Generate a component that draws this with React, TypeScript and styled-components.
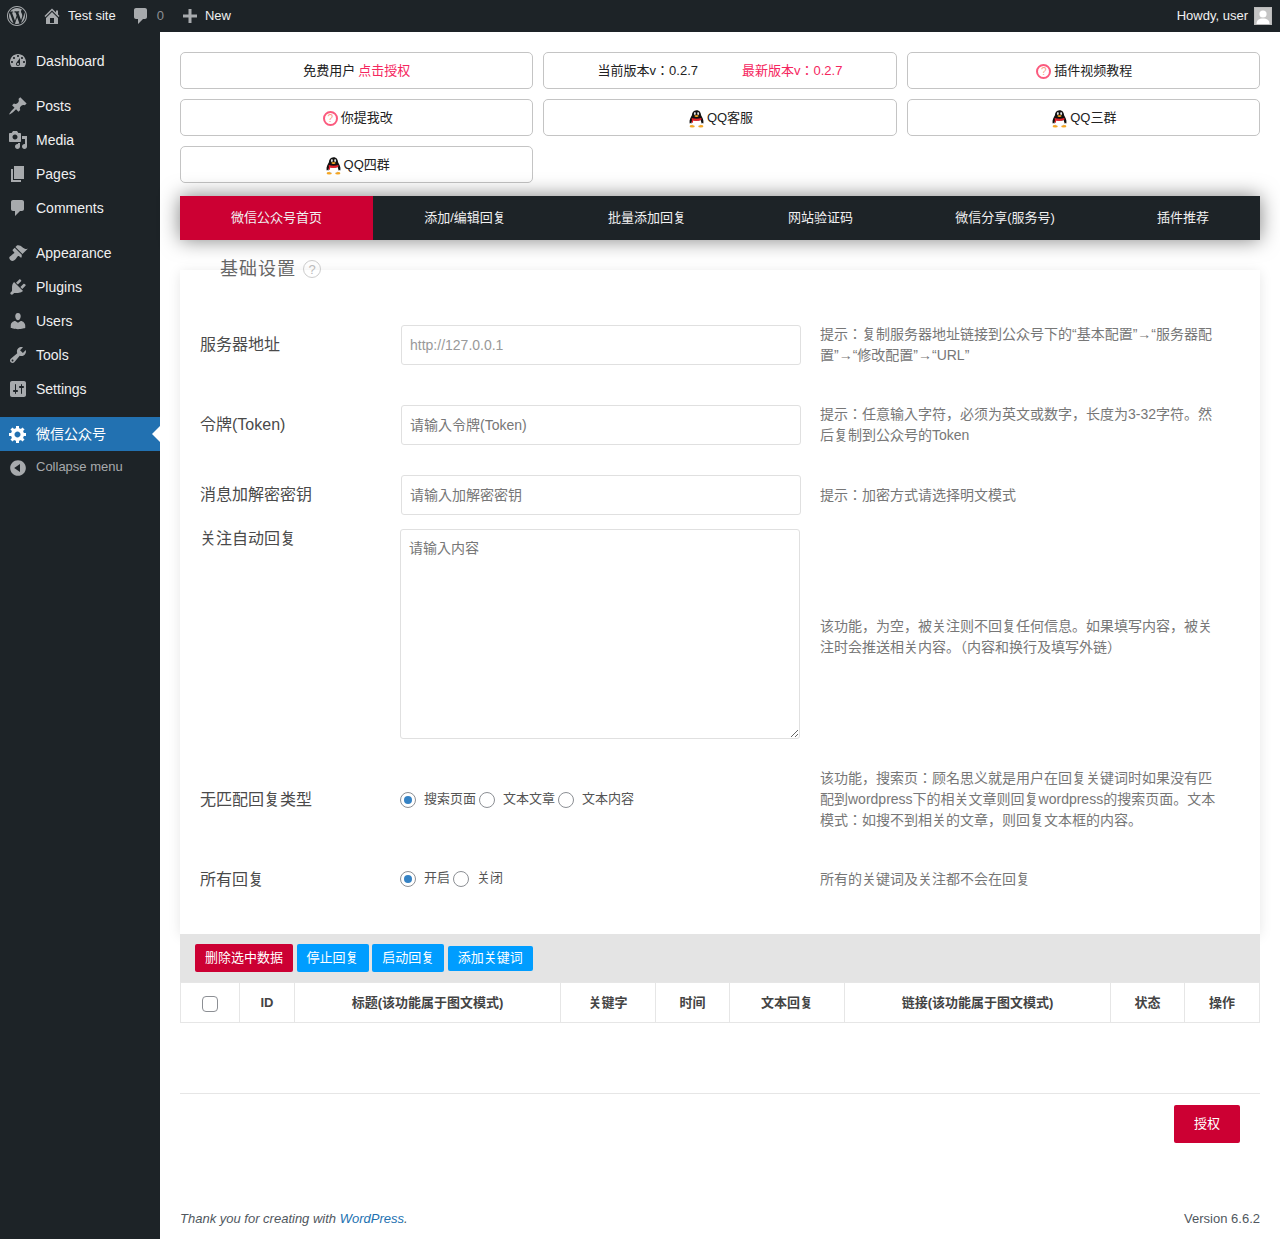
import React from 'react';
import styled, { createGlobalStyle } from 'styled-components';

const FONT = '"Liberation Sans", "Noto Sans CJK JP", sans-serif';

const GlobalStyle = createGlobalStyle`
  html, body { margin: 0; padding: 0; background: #fff; }
  body { font-family: ${FONT}; font-size: 13px; line-height: 1.15; color: #3c434a; }
  * { box-sizing: border-box; }
`;

const ICONS: Record<string, string> = {
  wp: 'M20 10c0-5.52-4.48-10-10-10S0 4.48 0 10s4.48 10 10 10 10-4.48 10-10zM10 1.01c4.97 0 8.99 4.02 8.99 8.99s-4.02 8.99-8.99 8.99S1.01 14.97 1.01 10 5.03 1.01 10 1.01zM8.01 14.82L4.96 6.61c.49-.03 1.05-.08 1.05-.08.43-.05.38-1.01-.06-.99 0 0-1.29.1-2.13.1-.15 0-.33 0-.52-.01 1.44-2.17 3.9-3.6 6.7-3.6 2.09 0 3.99.79 5.41 2.09-.6-.08-1.45.35-1.45 1.42 0 .66.38 1.22.79 1.88.31.54.5 1.22.5 2.21 0 1.34-1.27 4.48-1.27 4.48l-2.71-7.5c.48-.03.75-.16.75-.16.43-.05.38-1.1-.05-1.08 0 0-1.3.11-2.14.11-.78 0-2.11-.11-2.11-.11-.43-.02-.48 1.06-.05 1.08l.84.08 1.12 3.04zm6.02 2.15L16.64 10s.67-1.69.39-3.81c.63 1.14.94 2.42.94 3.81 0 2.96-1.56 5.58-3.94 7.01zM2.68 6.77L6.5 17.25c-2.67-1.3-4.47-4.08-4.47-7.25 0-1.16.2-2.23.65-3.23zm7.45 4.53l2.29 6.25c-.76.27-1.57.42-2.42.42-.72 0-1.41-.11-2.06-.3z',
  home: 'M16 8.5l1.53 1.53-1.06 1.06L10 4.62l-6.47 6.47-1.06-1.06L10 2.5l4 4v-2h2v4zm-6-2.46l6 5.99V18H4v-5.97zM12 17v-5H8v5h4z',
  plus: 'M17 8.5v3h-5.5V17h-3v-5.5H3v-3h5.5V3h3v5.5H17z',
  dashboard: 'M3.76 16h12.48c1.1-1.37 1.76-3.11 1.76-5 0-4.42-3.58-8-8-8s-8 3.58-8 8c0 1.89.66 3.63 1.76 5zM10 4c.55 0 1 .45 1 1s-.45 1-1 1-1-.45-1-1 .45-1 1-1zM6 6c.55 0 1 .45 1 1s-.45 1-1 1-1-.45-1-1 .45-1 1-1zm8 0c.55 0 1 .45 1 1s-.45 1-1 1-1-.45-1-1 .45-1 1-1zm-5.37 5.55L12 7v6c0 1.1-.9 2-2 2s-2-.9-2-2c0-.57.24-1.08.63-1.45zM4 10c.55 0 1 .45 1 1s-.45 1-1 1-1-.45-1-1 .45-1 1-1zm12 0c.55 0 1 .45 1 1s-.45 1-1 1-1-.45-1-1 .45-1 1-1zm-5 3c0-.55-.45-1-1-1s-1 .45-1 1 .45 1 1 1 1-.45 1-1z',
  post: 'M10.44 3.02l1.82-1.82 6.36 6.35-1.83 1.82c-1.05-.68-2.48-.57-3.41.36l-.75.75c-.92.93-1.04 2.35-.35 3.41l-1.83 1.82-2.41-2.41-2.8 2.79c-.42.42-3.38 2.71-3.8 2.29s1.86-3.39 2.28-3.81l2.79-2.79L4.1 9.36l1.83-1.82c1.05.69 2.48.57 3.4-.36l.75-.75c.93-.92 1.05-2.35.36-3.41z',
  media: 'M13 11V4c0-.55-.45-1-1-1h-1.67L9 1H5L3.67 3H2c-.55 0-1 .45-1 1v7c0 .55.45 1 1 1h10c.55 0 1-.45 1-1zM7 4.5c1.38 0 2.5 1.12 2.5 2.5S8.38 9.5 7 9.5 4.5 8.38 4.5 7 5.62 4.5 7 4.5zM14 6h5v10.5c0 1.38-1.12 2.5-2.5 2.5S14 17.88 14 16.5s1.12-2.5 2.5-2.5c.17 0 .34.02.5.05V9h-3V6zm-4 8.05V13h2v3.5c0 1.38-1.12 2.5-2.5 2.5S7 17.88 7 16.5 8.12 14 9.5 14c.17 0 .34.02.5.05z',
  page: 'M6 15V2h10v13H6zm-1 1h8v2H3V5h2v11z',
  comment: 'M5 2h9c1.1 0 2 .9 2 2v7c0 1.1-.9 2-2 2h-2l-5 5v-5H5c-1.1 0-2-.9-2-2V4c0-1.1.9-2 2-2z',
  appearance: 'M14.48 11.06L7.41 3.99l1.5-1.5c.5-.56 2.3-.47 3.51.32 1.21.8 1.43 1.28 2.91 2.1 1.18.64 2.45 1.26 4.45.85zm-.71.71L6.7 4.7 4.93 6.47c-.39.39-.39 1.02 0 1.41l1.06 1.06c.39.39.39 1.03 0 1.42-.6.6-1.43 1.11-2.21 1.69-.35.26-.7.53-1.01.84C1.43 13.23.4 14.98 2.3 16.88c1.89 1.9 3.65.86 4.97-.45.31-.31.58-.66.84-1.01.58-.78 1.09-1.61 1.69-2.21.39-.39 1.02-.39 1.41 0l1.06 1.06c.39.39 1.02.39 1.41 0z',
  plugin: 'M13.11 4.36L9.87 7.6 8 5.73l3.24-3.24c.35-.34 1.05-.2 1.56.32.52.51.66 1.21.31 1.55zm-8 1.77l.91-1.12 9.01 9.01-1.19.84c-.71.71-2.63 1.16-3.82 1.16H6.14L4.9 17.26c-.59.59-1.54.59-2.12 0-.59-.58-.59-1.53 0-2.12l1.24-1.24v-3.88c0-1.13.4-3.19 1.09-3.89zm7.26 3.97l3.24-3.24c.34-.35 1.04-.21 1.55.31.52.51.66 1.21.31 1.55l-3.24 3.25z',
  users: 'M10 9.25c-2.27 0-2.73-3.44-2.73-3.44C7 4.02 7.82 2 9.97 2c2.16 0 2.98 2.02 2.71 3.81 0 0-.41 3.44-2.68 3.44zm0 2.57L12.72 10c2.39 0 4.52 2.33 4.52 4.53v2.49s-3.65 1.13-7.24 1.13c-3.65 0-7.24-1.13-7.24-1.13v-2.49c0-2.25 1.94-4.48 4.47-4.48z',
  tools: 'M16.68 9.77c-1.34 1.34-3.3 1.67-4.95.99l-5.41 6.52c-.99.99-2.59.99-3.58 0s-.99-2.59 0-3.57l6.52-5.42c-.68-1.65-.35-3.61.99-4.95 1.28-1.28 3.12-1.62 4.72-1.06l-2.89 2.89 2.82 2.82 2.86-2.87c.53 1.58.18 3.39-1.08 4.65zM3.81 16.21c.4.39 1.04.39 1.43 0 .4-.4.4-1.04 0-1.43-.39-.4-1.03-.4-1.43 0-.39.39-.39 1.03 0 1.43z',
  settings: 'M18 16V4c0-1.1-.9-2-2-2H4c-1.1 0-2 .9-2 2v12c0 1.1.9 2 2 2h12c1.1 0 2-.9 2-2zM8 11h1c.55 0 1 .45 1 1s-.45 1-1 1H8v1.5c0 .28-.22.5-.5.5s-.5-.22-.5-.5V13H6c-.55 0-1-.45-1-1s.45-1 1-1h1V5.5c0-.28.22-.5.5-.5s.5.22.5.5V11zm5-2h-1c-.55 0-1-.45-1-1s.45-1 1-1h1V5.5c0-.28.22-.5.5-.5s.5.22.5.5V7h1c.55 0 1 .45 1 1s-.45 1-1 1h-1v5.5c0 .28-.22.5-.5.5s-.5-.22-.5-.5V9z',
  gear: 'M18 12h-2.18c-.17.7-.44 1.35-.81 1.93l1.54 1.54-2.1 2.1-1.54-1.54c-.58.36-1.23.63-1.91.79V19H8v-2.18c-.68-.16-1.33-.43-1.91-.79l-1.54 1.54-2.12-2.12 1.54-1.54c-.36-.58-.63-1.23-.79-1.91H1V9.03h2.17c.16-.7.44-1.35.8-1.94L2.43 5.55l2.1-2.1 1.54 1.54c.58-.37 1.24-.64 1.93-.81V2h3v2.18c.68.16 1.33.43 1.91.79l1.54-1.54 2.12 2.12-1.54 1.54c.36.59.64 1.24.8 1.94H18V12zm-8.5 1.5c1.66 0 3-1.34 3-3s-1.34-3-3-3-3 1.34-3 3 1.34 3 3 3z',
  collapse: 'M10 2.16c4.33 0 7.84 3.51 7.84 7.84s-3.51 7.84-7.84 7.84S2.16 14.33 2.16 10 5.71 2.16 10 2.16zm2 11.72V6.12L6.18 9.97z',
};

const Dash = ({ name, size = 20, color = '#a7aaad' }: { name: string; size?: number; color?: string }) => (
  <svg width={size} height={size} viewBox="0 0 20 20" fill={color} fillRule="evenodd">
    <path d={ICONS[name]} />
  </svg>
);

const QQ = () => (
  <svg width="17" height="18" viewBox="0 0 17 18">
    <ellipse cx="4.2" cy="16.3" rx="2.6" ry="1.3" fill="#f5a623" />
    <ellipse cx="12.8" cy="16.3" rx="2.6" ry="1.3" fill="#f5a623" />
    <path d="M8.5 0.3c3 0 4.4 2.2 4.6 5 1.2 2 2.8 5 2.3 7.6-.2.9-1 .6-1.7-.3-.4 2.4-2.3 3.4-5.2 3.4s-4.8-1-5.2-3.4c-.7.9-1.5 1.2-1.7.3-.5-2.6 1.1-5.6 2.3-7.6.2-2.8 1.6-5 4.6-5z" fill="#111" />
    <path d="M4.4 10c1.6.8 6.6.8 8.2 0 .7 1.8.9 3.2.6 4.1-.5 1.5-2.2 2.1-4.7 2.1s-4.2-.6-4.7-2.1c-.3-.9-.1-2.3.6-4.1z" fill="#fff" />
    <path d="M3.8 7.9c2.6 1.1 6.8 1.1 9.4 0 .4.4.4 1.5 0 1.9-.6.5-1.6.8-2.8 1-1.9.2-3.9.1-5.3-.3l-.1 2.4c-.7-.2-1.2-.6-1.4-1.2l.4-2c-.4-.4-.4-1.4-.2-1.8z" fill="#e8202a" />
    <ellipse cx="6.9" cy="3.7" rx="1" ry="1.4" fill="#fff" />
    <ellipse cx="10.1" cy="3.7" rx="1" ry="1.4" fill="#fff" />
    <circle cx="7.1" cy="4" r=".5" fill="#111" />
    <circle cx="9.9" cy="4" r=".5" fill="#111" />
    <path d="M6.3 5.7c1-.6 3.4-.6 4.4 0-.6 1-1.4 1.3-2.2 1.3s-1.6-.3-2.2-1.3z" fill="#f5a623" />
  </svg>
);

const Help = styled.span<{ $size: number; $ring: number; $color: string; $mark: string }>`
  display: inline-flex;
  align-items: center;
  justify-content: center;
  flex: none;
  width: ${(p) => p.$size}px;
  height: ${(p) => p.$size}px;
  border: ${(p) => p.$ring}px solid ${(p) => p.$color};
  border-radius: 50%;
  color: ${(p) => p.$mark};
  font-size: ${(p) => p.$size - 5}px;
  letter-spacing: 0;
  line-height: 1;
`;

const Page = styled.div`
  display: grid;
  grid-template-columns: 160px 1fr;
  grid-template-rows: 32px 1fr;
  min-height: 1239px;
`;

const AdminBar = styled.header`
  grid-column: 1 / 3;
  display: flex;
  align-items: center;
  height: 32px;
  padding: 0 8px 0 7px;
  background: #1d2327;
  color: #f0f0f1;
  font-size: 13px;
`;

const BarItem = styled.span<{ $gap?: number; $left?: number; $muted?: boolean }>`
  display: flex;
  align-items: center;
  gap: ${(p) => p.$gap ?? 6}px;
  margin-left: ${(p) => p.$left ?? 0}px;
  color: ${(p) => (p.$muted ? '#a7aaad' : '#f0f0f1')};
`;

const Count = styled.span`
  color: #8c8f94;
`;

const Howdy = styled.span`
  display: flex;
  align-items: center;
  gap: 6px;
  margin-left: auto;
`;

const Avatar = styled.span`
  display: block;
  width: 18px;
  height: 18px;
  background: #c4c4c4;
  border: 1px solid #bbb;
  overflow: hidden;
  svg { display: block; }
`;

const Sidebar = styled.nav`
  background: #1d2327;
  padding-top: 12px;
`;

const MenuItem = styled.div<{ $active?: boolean }>`
  position: relative;
  display: flex;
  align-items: center;
  height: 34px;
  padding-left: 8px;
  gap: 8px;
  font-size: 14px;
  color: ${(p) => (p.$active ? '#fff' : '#f0f0f1')};
  background: ${(p) => (p.$active ? '#2271b1' : 'transparent')};
`;

const ActiveArrow = styled.span`
  position: absolute;
  right: 0;
  top: 50%;
  margin-top: -8px;
  border: 8px solid transparent;
  border-right-color: #fff;
  border-left-width: 0;
`;

const MenuSep = styled.div`
  height: 11px;
`;

const CollapseRow = styled.div`
  display: flex;
  align-items: center;
  gap: 8px;
  height: 33px;
  padding-left: 8px;
  font-size: 13px;
  color: #a7aaad;
`;

const Content = styled.main`
  display: flex;
  flex-direction: column;
  padding: 20px 20px 0;
  min-width: 0;
`;

const LinkGrid = styled.div`
  display: grid;
  grid-template-columns: repeat(3, 1fr);
  gap: 10px;
`;

const LinkBox = styled.div<{ $gap?: number; $pad?: number }>`
  display: flex;
  align-items: center;
  justify-content: center;
  gap: ${(p) => p.$gap ?? 2}px;
  height: 37px;
  padding-top: 2px;
  padding-left: ${(p) => p.$pad ?? 1}px;
  border: 1px solid #c4c4c4;
  border-radius: 5px;
  color: #222;
  font-size: 13px;
`;

const Pink = styled.span`
  color: #f5265e;
`;

const Tabs = styled.div`
  display: flex;
  height: 44px;
  margin-top: 13px;
  background: #1d2327;
  box-shadow: 0 0 20px rgba(0, 0, 0, 0.5);
`;

const Tab = styled.div<{ $active?: boolean }>`
  flex: 1 1 auto;
  display: flex;
  align-items: center;
  justify-content: center;
  padding: 0 30px;
  font-size: 13px;
  color: #f0f0f1;
  background: ${(p) => (p.$active ? '#cc0033' : 'transparent')};
`;

const Panel = styled.section`
  height: 664px;
  margin-top: 30px;
  padding: 0 20px;
  background: #fff;
  box-shadow: 0 2px 12px rgba(0, 0, 0, 0.1);
`;

const Legend = styled.div`
  display: flex;
  align-items: center;
  gap: 7px;
  height: 24px;
  margin: -13px 0 0 20px;
  font-size: 18px;
  letter-spacing: 1px;
  color: #666;
`;

const FormRow = styled.div<{ $top: number; $height: number }>`
  display: grid;
  grid-template-columns: 200px 420px 400px;
  grid-template-rows: 100%;
  align-items: center;
  height: ${(p) => p.$height}px;
  margin-top: ${(p) => p.$top}px;
`;

const FieldLabel = styled.label<{ $atTop?: boolean; $shift?: number }>`
  align-self: ${(p) => (p.$atTop ? 'start' : 'center')};
  margin-top: ${(p) => p.$shift ?? 0}px;
  font-size: 16px;
  color: #4a4a4a;
`;

const Hint = styled.div<{ $shift?: number }>`
  margin-top: ${(p) => p.$shift ?? 0}px;
  font-size: 14px;
  line-height: 21px;
  color: #777;
`;

const TextInput = styled.input<{ $light?: boolean }>`
  display: block;
  width: 400px;
  height: 40px;
  margin-left: 1px;
  padding: 0 8px;
  border: 1px solid #e0e0e0;
  border-radius: 3px;
  font: 14px ${FONT};
  color: #333;
  outline: none;
  &::placeholder { color: ${(p) => (p.$light ? '#999' : '#777')}; }
`;

const TextArea = styled.textarea`
  display: block;
  width: 400px;
  height: 210px;
  padding: 8px;
  border: 1px solid #e0e0e0;
  border-radius: 3px;
  font: 14px/20px ${FONT};
  &::placeholder { color: #777; }
`;

const RadioGroup = styled.div`
  display: flex;
  align-items: center;
  font-size: 13px;
  color: #555;
`;

const Radio = styled.input.attrs({ type: 'radio' })`
  appearance: none;
  position: relative;
  flex: none;
  width: 16px;
  height: 16px;
  margin: 0 8px 0 3px;
  border: 1px solid #8c8f94;
  border-radius: 50%;
  background: #fff;
  &:first-child { margin-left: 0; }
  &:checked::before {
    content: '';
    position: absolute;
    left: 3px;
    top: 3px;
    width: 8px;
    height: 8px;
    border-radius: 50%;
    background: #3582c4;
  }
`;

const Toolbar = styled.div`
  display: flex;
  align-items: center;
  gap: 3.6px;
  height: 48px;
  padding-left: 15px;
  background: #e4e4e4;
`;

const ActionButton = styled.span<{ $red?: boolean; $short?: boolean }>`
  display: flex;
  align-items: center;
  height: ${(p) => (p.$short ? 25 : 28)}px;
  padding: 0 10px;
  border-radius: 2px;
  font-size: 13px;
  color: #fff;
  background: ${(p) => (p.$red ? '#cc0033' : '#009dff')};
`;

const DataTable = styled.table`
  width: 1079px;
  table-layout: fixed;
  border-collapse: collapse;
`;

const Th = styled.th<{ $w: number }>`
  width: ${(p) => p.$w}px;
  height: 40px;
  padding: 2px 0 0;
  border: 1px solid #e6e6e6;
  font-size: 13px;
  font-weight: 700;
  color: #444;
  text-align: center;
`;

const Check = styled.input.attrs({ type: 'checkbox' })`
  appearance: none;
  display: block;
  width: 16px;
  height: 16px;
  margin: 0 auto;
  border: 1px solid #8c8f94;
  border-radius: 4px;
  background: #fff;
`;

const Rule = styled.div`
  margin-top: 70px;
  border-top: 1px solid #e6e6e6;
`;

const SubmitRow = styled.div`
  display: flex;
  justify-content: flex-end;
  padding: 11px 20px 0 0;
`;

const Submit = styled.span`
  display: flex;
  align-items: center;
  justify-content: center;
  width: 66px;
  height: 38px;
  border-radius: 2px;
  background: #cc0033;
  color: #fff;
  font-size: 13px;
`;

const Footer = styled.footer`
  display: flex;
  justify-content: space-between;
  margin-top: auto;
  padding-bottom: 12px;
  font-size: 13px;
  line-height: 16px;
  color: #50575e;
`;

const Thanks = styled.em`
  a { color: #2271b1; text-decoration: none; }
`;

const MENU: (string | [string, string])[] = [
  ['dashboard', 'Dashboard'],
  'sep',
  ['post', 'Posts'],
  ['media', 'Media'],
  ['page', 'Pages'],
  ['comment', 'Comments'],
  'sep',
  ['appearance', 'Appearance'],
  ['plugin', 'Plugins'],
  ['users', 'Users'],
  ['tools', 'Tools'],
  ['settings', 'Settings'],
  'sep',
];

const TABS = ['微信公众号首页', '添加/编辑回复', '批量添加回复', '网站验证码', '微信分享(服务号)', '插件推荐'];

const COLUMNS: [string, number][] = [
  ['ID', 55],
  ['标题(该功能属于图文模式)', 266],
  ['关键字', 95],
  ['时间', 74],
  ['文本回复', 115],
  ['链接(该功能属于图文模式)', 266],
  ['状态', 74],
  ['操作', 75],
];

const PinkHelp = () => <Help $size={15} $ring={2} $color="#fb5a7e" $mark="#f79a86">?</Help>;

export default function App() {
  return (
    <Page>
      <GlobalStyle />
      <AdminBar>
        <Dash name="wp" />
        <BarItem $left={15} $gap={6}><Dash name="home" />Test site</BarItem>
        <BarItem $left={15} $gap={6} $muted><Dash name="comment" /><Count>0</Count></BarItem>
        <BarItem $left={16} $gap={5}><Dash name="plus" />New</BarItem>
        <Howdy>
          Howdy, user
          <Avatar>
            <svg width="16" height="16" viewBox="0 0 16 16" fill="#fff">
              <circle cx="8" cy="6" r="3.6" />
              <path d="M1.5 16c0-4 2.6-5.6 6.5-5.6s6.5 1.6 6.5 5.6z" />
            </svg>
          </Avatar>
        </Howdy>
      </AdminBar>

      <Sidebar>
        {MENU.map((m, i) =>
          m === 'sep' ? (
            <MenuSep key={i} />
          ) : (
            <MenuItem key={i}>
              <Dash name={m[0]} />
              {m[1]}
            </MenuItem>
          ),
        )}
        <MenuItem $active>
          <Dash name="gear" color="#fff" />
          微信公众号
          <ActiveArrow />
        </MenuItem>
        <CollapseRow>
          <Dash name="collapse" />
          Collapse menu
        </CollapseRow>
      </Sidebar>

      <Content>
        <LinkGrid>
          <LinkBox $gap={3} $pad={0}>免费用户<Pink>点击授权</Pink></LinkBox>
          <LinkBox $gap={44} $pad={0}>
            <span>当前版本v：0.2.7</span>
            <Pink>最新版本v：0.2.7</Pink>
          </LinkBox>
          <LinkBox $gap={3} $pad={2}><PinkHelp />插件视频教程</LinkBox>
          <LinkBox $gap={3} $pad={2}><PinkHelp />你提我改</LinkBox>
          <LinkBox><QQ />QQ客服</LinkBox>
          <LinkBox><QQ />QQ三群</LinkBox>
          <LinkBox><QQ />QQ四群</LinkBox>
        </LinkGrid>

        <Tabs>
          {TABS.map((t, i) => (
            <Tab key={t} $active={i === 0}>{t}</Tab>
          ))}
        </Tabs>

        <Panel>
          <Legend>
            基础设置
            <Help $size={18} $ring={1.5} $color="#ccc" $mark="#bbb">?</Help>
          </Legend>

          <FormRow $top={44} $height={40}>
            <FieldLabel>服务器地址</FieldLabel>
            <TextInput $light placeholder="http://127.0.0.1" />
            <Hint>提示：复制服务器地址链接到公众号下的“基本配置”→“服务器配置”→“修改配置”→“URL”</Hint>
          </FormRow>
          <FormRow $top={40} $height={40}>
            <FieldLabel>令牌(Token)</FieldLabel>
            <TextInput placeholder="请输入令牌(Token)" />
            <Hint>提示：任意输入字符，必须为英文或数字，长度为3-32字符。然后复制到公众号的Token</Hint>
          </FormRow>
          <FormRow $top={30} $height={40}>
            <FieldLabel>消息加解密密钥</FieldLabel>
            <TextInput placeholder="请输入加解密密钥" />
            <Hint>提示：加密方式请选择明文模式</Hint>
          </FormRow>
          <FormRow $top={14} $height={210}>
            <FieldLabel $atTop $shift={1}>关注自动回复</FieldLabel>
            <TextArea placeholder="请输入内容" />
            <Hint $shift={6}>该功能，为空，被关注则不回复任何信息。如果填写内容，被关注时会推送相关内容。（内容和换行及填写外链）</Hint>
          </FormRow>
          <FormRow $top={29} $height={63}>
            <FieldLabel $shift={2}>无匹配回复类型</FieldLabel>
            <RadioGroup>
              <Radio name="nomatch" defaultChecked />搜索页面
              <Radio name="nomatch" />文本文章
              <Radio name="nomatch" />文本内容
            </RadioGroup>
            <Hint>该功能，搜索页：顾名思义就是用户在回复关键词时如果没有匹配到wordpress下的相关文章则回复wordpress的搜索页面。文本模式：如搜不到相关的文章，则回复文本框的内容。</Hint>
          </FormRow>
          <FormRow $top={37} $height={21}>
            <FieldLabel $shift={4}>所有回复</FieldLabel>
            <RadioGroup>
              <Radio name="all" defaultChecked />开启
              <Radio name="all" />关闭
            </RadioGroup>
            <Hint $shift={2}>所有的关键词及关注都不会在回复</Hint>
          </FormRow>
        </Panel>

        <Toolbar>
          <ActionButton $red>删除选中数据</ActionButton>
          <ActionButton>停止回复</ActionButton>
          <ActionButton>启动回复</ActionButton>
          <ActionButton $short>添加关键词</ActionButton>
        </Toolbar>

        <DataTable>
          <thead>
            <tr>
              <Th $w={59}><Check /></Th>
              {COLUMNS.map(([title, w]) => (
                <Th key={title} $w={w}>{title}</Th>
              ))}
            </tr>
          </thead>
        </DataTable>

        <Rule />
        <SubmitRow><Submit>授权</Submit></SubmitRow>

        <Footer>
          <Thanks>Thank you for creating with <a>WordPress</a>.</Thanks>
          <span>Version 6.6.2</span>
        </Footer>
      </Content>
    </Page>
  );
}
